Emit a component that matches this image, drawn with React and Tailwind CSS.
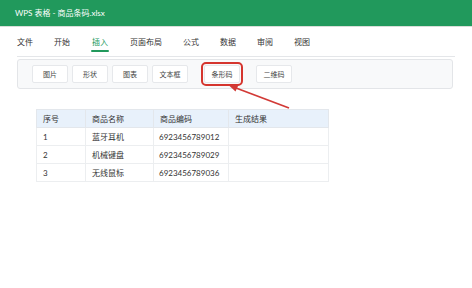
const tabs = ["文件", "开始", "插入", "页面布局", "公式", "数据", "审阅", "视图"];

const rows = [
  { id: 1, name: "蓝牙耳机", code: "6923456789012" },
  { id: 2, name: "机械键盘", code: "6923456789029" },
  { id: 3, name: "无线鼠标", code: "6923456789036" },
];

function ToolButton({ label, highlight }) {
  return (
    <button
      className={`w-[36px] h-[18px] bg-white border border-[#e6e8eb] rounded-[2px] text-[7px] text-[#444] flex items-center justify-center ${
        highlight ? "outline-2 outline-[#d5352e] outline-offset-[1px]" : ""
      }`}
    >
      {label}
    </button>
  );
}

export default function App() {
  return (
    <div className="relative w-[472px] h-[288px] bg-white overflow-hidden font-['Lato','Noto_Sans_CJK_SC',sans-serif] text-[#333]">
      <div className="h-[27px] bg-[#21995c] flex items-center px-[15px] text-white text-[8px] border-b border-[#d9ded9]">
        WPS 表格 - 商品条码.xlsx
      </div>

      <div className="mx-[17px] flex gap-[21px] pt-[9px] border-b border-[#e4e6e9] h-[30px]">
        {tabs.map((t) => (
          <div key={t} className="flex flex-col items-center">
            <span
              className={`text-[8px] leading-[12px] ${
                t === "插入" ? "text-[#21995c]" : "text-[#333]"
              }`}
            >
              {t}
            </span>
            {t === "插入" && (
              <div className="mt-[2px] h-[2px] w-[18px] bg-[#21995c] rounded-full" />
            )}
          </div>
        ))}
      </div>

      <div className="mt-[2px] ml-[17px] w-[436px] h-[30px] bg-[#f8f9fa] border border-[#e3e5e8] rounded-[3px] flex items-center pl-[14px]">
        <div className="flex gap-[4px]">
          <ToolButton label="图片" />
          <ToolButton label="形状" />
          <ToolButton label="图表" />
          <ToolButton label="文本框" />
        </div>
        <div className="flex gap-[16px] ml-[16px]">
          <ToolButton label="条形码" highlight />
          <ToolButton label="二维码" />
        </div>
      </div>

      <table className="mt-[20px] ml-[36px] w-[292px] table-fixed border-collapse text-[8px]">
        <colgroup>
          <col className="w-[49px]" />
          <col className="w-[68px]" />
          <col className="w-[75px]" />
          <col className="w-[100px]" />
        </colgroup>
        <thead>
          <tr className="h-[18px] bg-[#e8f1fb]">
            {["序号", "商品名称", "商品编码", "生成结果"].map((h) => (
              <th
                key={h}
                className="border border-[#e3e7ec] text-left font-normal px-[6px] text-[#333]"
              >
                {h}
              </th>
            ))}
          </tr>
        </thead>
        <tbody>
          {rows.map((r) => (
            <tr key={r.id} className="h-[18px]">
              <td className="border border-[#eceef0] px-[6px]">{r.id}</td>
              <td className="border border-[#eceef0] px-[6px]">{r.name}</td>
              <td className="border border-[#eceef0] px-[5px]">{r.code}</td>
              <td className="border border-[#eceef0] px-[6px]"></td>
            </tr>
          ))}
        </tbody>
      </table>

      <svg
        className="absolute left-0 top-0 pointer-events-none"
        width="472"
        height="288"
        viewBox="0 0 472 288"
      >
        <line x1="289" y1="108" x2="236" y2="88" stroke="#d23a36" strokeWidth="1.8" />
        <polygon points="229,85.5 238.5,85 235.5,91.5" fill="#d23a36" />
      </svg>
    </div>
  );
}
